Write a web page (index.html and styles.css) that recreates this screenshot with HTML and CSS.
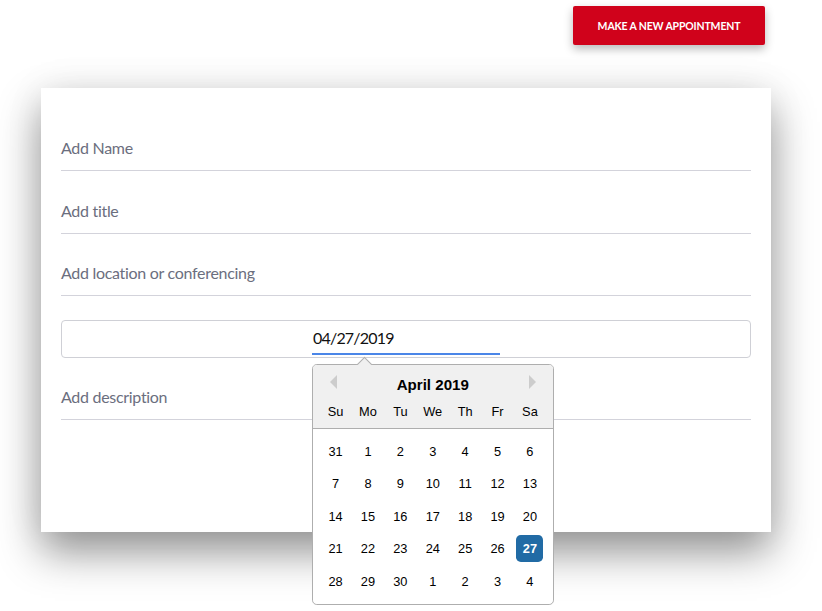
FILE: index.html
```html
<!DOCTYPE html>
<html>
<head>
<meta charset="utf-8">
<link rel="stylesheet" href="styles.css">
</head>
<body>
<div class="page">
  <div class="topbar">
    <button class="btn-new">MAKE A NEW APPOINTMENT</button>
  </div>
  <div class="card">
    <div class="field first"><span class="ph">Add Name</span></div>
    <div class="field"><span class="ph">Add title</span></div>
    <div class="field"><span class="ph">Add location or conferencing</span></div>
    <div class="datebox">
      <div class="dateinput">
        <span class="dateval">04/27/2019</span>
        <div class="dp">
          <div class="dp-tri"></div>
          <div class="dp-head">
            <span class="nav nav-prev"></span>
            <span class="nav nav-next"></span>
            <div class="dp-month">April 2019</div>
            <div class="dp-row">
              <div class="dn">Su</div><div class="dn">Mo</div><div class="dn">Tu</div><div class="dn">We</div><div class="dn">Th</div><div class="dn">Fr</div><div class="dn">Sa</div>
            </div>
          </div>
          <div class="dp-body">
            <div class="dp-row"><div class="d">31</div><div class="d">1</div><div class="d">2</div><div class="d">3</div><div class="d">4</div><div class="d">5</div><div class="d">6</div></div>
            <div class="dp-row"><div class="d">7</div><div class="d">8</div><div class="d">9</div><div class="d">10</div><div class="d">11</div><div class="d">12</div><div class="d">13</div></div>
            <div class="dp-row"><div class="d">14</div><div class="d">15</div><div class="d">16</div><div class="d">17</div><div class="d">18</div><div class="d">19</div><div class="d">20</div></div>
            <div class="dp-row"><div class="d">21</div><div class="d">22</div><div class="d">23</div><div class="d">24</div><div class="d">25</div><div class="d">26</div><div class="d sel">27</div></div>
            <div class="dp-row"><div class="d">28</div><div class="d">29</div><div class="d">30</div><div class="d">1</div><div class="d">2</div><div class="d">3</div><div class="d">4</div></div>
          </div>
        </div>
      </div>
    </div>
    <div class="field desc"><span class="ph">Add description</span></div>
  </div>
</div>
</body>
</html>
```
FILE: styles.css
```css
* { box-sizing: border-box; }
html, body { margin: 0; padding: 0; background: #fff; }
body { font-family: Lato, "Open Sans", sans-serif; width: 822px; height: 611px; overflow: hidden; }
.page { padding-top: 6px; }
.topbar { display: flex; justify-content: flex-end; padding-right: 57px; }
.btn-new {
  width: 192px; height: 39px;
  background: #d0021b; color: #fff; border: none; border-radius: 2px;
  font-family: Lato, sans-serif; font-size: 10.5px; font-weight: 700; letter-spacing: -0.15px;
  box-shadow: 0 4px 10px rgba(0,0,0,0.28);
  padding: 0;
}
.card {
  margin-top: 43px; margin-left: 41px;
  width: 730px; height: 444px;
  background: #fff;
  padding: 42px 20px 0 20px;
  box-shadow: 0 20px 40px rgba(0,0,0,0.42), 0 0 40px rgba(0,0,0,0.06);
}
.field {
  height: 41px; border-bottom: 1px solid #d3d3db;
  display: flex; align-items: center;
  margin-top: 21.5px;
}
.field.first { margin-top: 0; }
.ph { font-size: 16px; letter-spacing: -0.3px; color: #6b6e7e; padding-bottom: 5px; }
.datebox {
  margin-top: 24px; height: 38px;
  border: 1px solid #cfd0d6; border-radius: 4px;
  display: flex; justify-content: center;
}
.dateinput {
  position: relative; width: 188px; height: 34px;
  border-bottom: 2px solid #4a86e8;
  display: flex; align-items: center;
  padding-top: 1px;
}
.dateval { font-size: 16px; letter-spacing: -0.8px; color: #111; padding-left: 1px; }
.field.desc { margin-top: 21px; }

.dp {
  position: absolute; left: 0; top: 43px; z-index: 5;
  width: 241.5px;
  background: #fff; border: 1px solid #aeaeae; border-radius: 4.8px;
  font-family: "Liberation Sans", Arial, sans-serif; font-size: 12.8px; color: #000;
}
.dp-tri {
  position: absolute; left: 46px; top: -6px;
  width: 11px; height: 11px;
  background: #f0f0f0;
  border-top: 1px solid #aeaeae; border-left: 1px solid #aeaeae;
  transform: rotate(45deg);
}
.dp-head {
  position: relative;
  background: #f0f0f0; border-bottom: 1px solid #aeaeae;
  border-top-left-radius: 4px; border-top-right-radius: 4px;
  padding-top: 10px;
}
.nav {
  position: absolute; top: 10px; width: 0; height: 0;
  border: 7.2px solid transparent;
}
.nav-prev { left: 10px; border-right-color: #ccc; }
.nav-next { right: 10px; border-left-color: #ccc; }
.dp-month { text-align: center; font-weight: 700; font-size: 15.1px; line-height: 20px; }
.dp-row { display: flex; padding: 0 6.4px; }
.dn, .d {
  width: 27.2px; line-height: 27.2px; height: 27.2px; margin: 2.66px;
  text-align: center;
}
.dp-body { padding: 6.4px 0; }
.d.sel { background: #216ba5; color: #fff; border-radius: 4.8px; font-weight: 700; }
```
